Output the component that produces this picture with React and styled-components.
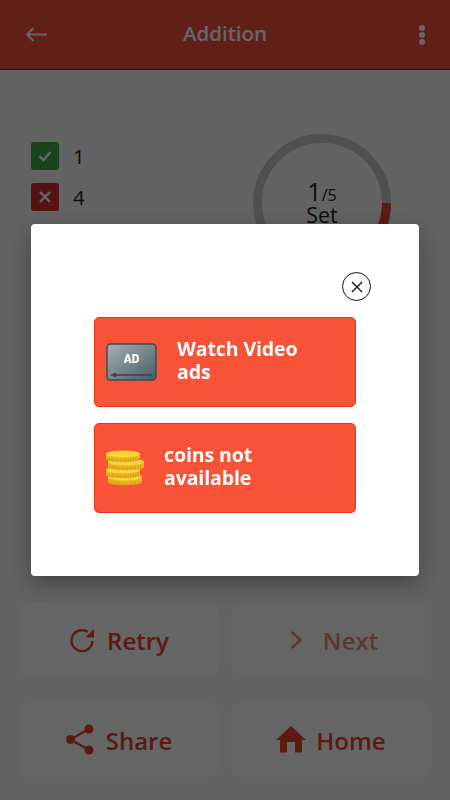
import React from 'react';
import styled, { createGlobalStyle } from 'styled-components';

function RetryIcon() {
  return (
    <svg width="26" height="26" viewBox="0 0 26 26">
      <path d="M23.5 14A10.5 10.5 0 1 1 19 5" fill="none" stroke="currentColor" strokeWidth="2.4" />
      <path d="M25 2v8.500h-8.500z" fill="currentColor" />
    </svg>
  );
}

function NextIcon() {
  return (
    <svg width="13" height="20" viewBox="0 0 13 20">
      <path d="M1.5 2l9 8-9 8" fill="none" stroke="currentColor" strokeWidth="2.6" />
    </svg>
  );
}

function ShareIcon() {
  return (
    <svg width="28" height="31" viewBox="0 0 28 31">
      <path d="M23 5L4.5 15.5 23 26" fill="none" stroke="currentColor" strokeWidth="2.2" />
      <circle cx="4.5" cy="15.5" r="4.5" fill="currentColor" />
      <circle cx="23" cy="5" r="4.5" fill="currentColor" />
      <circle cx="23" cy="26" r="4.5" fill="currentColor" />
    </svg>
  );
}

function HomeIcon() {
  return (
    <svg width="30" height="27" viewBox="0 0 30 27">
      <path d="M15 0l15 14h-4v12.500h-7V16h-8v10.500H4V14H0z" fill="currentColor" />
    </svg>
  );
}

const actions = [
  { label: 'Retry', icon: <RetryIcon />, gap: 12 },
  { label: 'Next', icon: <NextIcon />, gap: 20, disabled: true },
  { label: 'Share', icon: <ShareIcon />, gap: 12 },
  { label: 'Home', icon: <HomeIcon />, gap: 10 },
];

function AdIcon() {
  return (
    <svg width="52" height="39" viewBox="0 0 52 39">
      <defs>
        <linearGradient id="screen" x1="0" y1="0" x2="1" y2="1">
          <stop offset="0" stopColor="#a6afb4" />
          <stop offset="1" stopColor="#4a5c65" />
        </linearGradient>
      </defs>
      <rect x="1" y="1" width="49" height="36" rx="3.500" fill="url(#screen)" stroke="#3e4d57" strokeWidth="1.500" />
      <path d="M5 32h41" stroke="#36454e" strokeWidth="1.500" />
      <circle cx="9" cy="32" r="2" fill="#36454e" />
      <text x="25.500" y="19.500" fill="#fff" fontFamily="'Liberation Mono', monospace" fontWeight="700" fontSize="13" textAnchor="middle">AD</text>
    </svg>
  );
}

function Coin({ x, cy, w }) {
  const rx = w / 2;
  return (
    <g>
      <path d={`M${x} ${cy}v5c0 2 ${rx * 0.45} 3 ${rx} 3s${rx} -1 ${rx} -3v-5z`} fill="#e8b423" />
      <path d={`M${x + 1} ${cy + 5}c${rx * 0.4} 2.200 ${w - 2 - rx * 0.4} 2.200 ${w - 2} 0`} fill="none" stroke="#cf9c18" strokeWidth="3" strokeDasharray="1 1.600" />
      <ellipse cx={x + rx} cy={cy} rx={rx} ry="3.400" fill="#fdd436" />
    </g>
  );
}

function CoinsIcon() {
  return (
    <svg width="40" height="38" viewBox="0 0 40 38">
      <Coin x={2} cy={28} w={34} />
      <Coin x={0} cy={21} w={34} />
      <Coin x={2} cy={13} w={36} />
      <Coin x={0} cy={5} w={34} />
    </svg>
  );
}

// -- Component
export default function App() {
  return (
    <Page>
      <GlobalStyle />
      <Header>
        <svg width="22" height="15" viewBox="0 0 22 15">
          <path d="M22 7.500H2M8.500 1L2 7.500 8.500 14" fill="none" stroke="#fff" strokeWidth="2" />
        </svg>
        <Title>Addition</Title>
        <MoreDots>
          <i />
          <i />
          <i />
        </MoreDots>
      </Header>

      <Summary>
        <Scores>
          <ScoreRow>
            <ScoreBadge $color="#3fa844">
              <svg width="14" height="12" viewBox="0 0 14 12">
                <path d="M1.500 6l4 4 7-8" fill="none" stroke="#fff" strokeWidth="2.400" />
              </svg>
            </ScoreBadge>
            1
          </ScoreRow>
          <ScoreRow>
            <ScoreBadge $color="#d73131">
              <svg width="12" height="12" viewBox="0 0 12 12">
                <path d="M1 1l10 10M11 1L1 11" fill="none" stroke="#fff" strokeWidth="2.400" />
              </svg>
            </ScoreBadge>
            4
          </ScoreRow>
        </Scores>
        <Ring>
          <svg width="140" height="140" viewBox="0 0 140 140">
            <circle cx="70" cy="70" r="64.500" fill="none" stroke="#c9c9c9" strokeWidth="9" />
            <path d="M134.500 70A64.500 64.500 0 0 1 118 113" fill="none" stroke="#e8452c" strokeWidth="9" />
          </svg>
          <RingLabel>
            <SetLine>
              <SetCount>1</SetCount>
              <SetTotal>/5</SetTotal>
            </SetLine>
            <SetWord>Set</SetWord>
          </RingLabel>
        </Ring>
      </Summary>

      <Actions>
        {actions.map((action) => (
          <ActionButton key={action.label} $gap={action.gap} $disabled={action.disabled}>
            {action.icon}
            <ActionLabel>{action.label}</ActionLabel>
          </ActionButton>
        ))}
      </Actions>

      <Scrim>
        <Dialog>
          <CloseRow>
            <CloseButton>
              <svg width="12" height="12" viewBox="0 0 12 12">
                <path d="M1 1l10 10M11 1L1 11" fill="none" stroke="#111" strokeWidth="1.400" />
              </svg>
            </CloseButton>
          </CloseRow>
          <OfferButton $gap={19}>
            <AdIcon />
            <OfferLabel>Watch Video ads</OfferLabel>
          </OfferButton>
          <OfferButton $gap={18}>
            <CoinsIcon />
            <OfferLabel>coins not available</OfferLabel>
          </OfferButton>
        </Dialog>
      </Scrim>
    </Page>
  );
}

// -- Styles
const GlobalStyle = createGlobalStyle`
  html, body {
    margin: 0;
    padding: 0;
    overflow: hidden;
  }

  * {
    box-sizing: border-box;
  }
`;

const Page = styled.div`
  display: flex;
  flex-direction: column;
  width: 450px;
  height: 800px;
  background-color: #f8f8fa;
  font-family: 'Open Sans', sans-serif;
`;

const Header = styled.header`
  display: grid;
  grid-template-columns: 1fr auto 1fr;
  align-items: center;
  height: 70px;
  padding: 0 25px;
  background-color: #f0513a;
  border-bottom: 1px solid #c7280f;
`;

const Title = styled.h1`
  margin: 0 0 3px;
  color: #fff;
  font-size: 20.500px;
  font-weight: 600;
`;

const MoreDots = styled.div`
  display: flex;
  flex-direction: column;
  gap: 1px;
  justify-self: end;

  i {
    width: 6px;
    height: 6px;
    border-radius: 50%;
    background-color: #fff;
  }
`;

const Summary = styled.section`
  display: flex;
  justify-content: space-between;
  align-items: flex-start;
  height: 532px;
  padding: 63px 58px 0 31px;
`;

const Scores = styled.div`
  display: flex;
  flex-direction: column;
  gap: 13px;
  padding-top: 9px;
`;

const ScoreRow = styled.div`
  display: flex;
  align-items: center;
  gap: 14px;
  height: 28px;
  color: #1c1c1c;
  font-size: 20.500px;
`;

const ScoreBadge = styled.span`
  display: flex;
  align-items: center;
  justify-content: center;
  width: 28px;
  height: 28px;
  border-radius: 3px;
  background-color: ${({ $color }) => $color};
`;

const Ring = styled.div`
  display: grid;
  place-items: center;
  width: 140px;
  height: 140px;

  > * {
    grid-area: 1 / 1;
  }
`;

const RingLabel = styled.div`
  display: flex;
  flex-direction: column;
  align-items: center;
  color: #1c1c1c;
`;

const SetLine = styled.span`
  display: block;
  height: 24px;
  line-height: 24px;
`;

const SetCount = styled.span`
  font-size: 25px;
`;

const SetTotal = styled.span`
  font-size: 16px;
`;

const SetWord = styled.span`
  font-size: 21.500px;
  line-height: 24px;
`;

const Actions = styled.section`
  display: grid;
  grid-template-columns: 200px 200px;
  grid-auto-rows: 75px;
  gap: 25px 12px;
  padding: 0 19px;
`;

const ActionButton = styled.div`
  display: flex;
  align-items: center;
  justify-content: center;
  gap: ${({ $gap }) => $gap}px;
  padding-left: ${({ $disabled }) => ($disabled ? 6 : 0)}px;
  border-radius: 12px;
  background-color: #ffffff;
  color: #e5432a;
  font-size: 24px;
  font-weight: 600;
  opacity: ${({ $disabled }) => ($disabled ? 0.6 : 1)};
`;

const ActionLabel = styled.span`
  padding-top: 2px;
`;

const Scrim = styled.div`
  position: fixed;
  inset: 0;
  display: flex;
  align-items: center;
  justify-content: center;
  background-color: rgba(0, 0, 0, 0.6);
`;

const Dialog = styled.div`
  display: flex;
  flex-direction: column;
  align-items: center;
  gap: 16px;
  width: 388px;
  height: 352px;
  padding: 48px 0 0;
  border-radius: 4px;
  background-color: #fff;
  box-shadow: 0 8px 24px rgba(0, 0, 0, 0.35);
`;

const CloseRow = styled.div`
  display: flex;
  justify-content: flex-end;
  width: 100%;
  height: 29px;
  padding-right: 48px;
`;

const CloseButton = styled.div`
  display: flex;
  align-items: center;
  justify-content: center;
  width: 29px;
  height: 29px;
  border: 1.400px solid #111;
  border-radius: 50%;
`;

const OfferButton = styled.div`
  display: flex;
  align-items: center;
  gap: ${({ $gap }) => $gap}px;
  flex: none;
  width: 262px;
  height: 90px;
  padding: 0 11px;
  border: 1px solid #f0321a;
  border-radius: 5px;
  background-color: #f85336;
`;

const OfferLabel = styled.span`
  width: 140px;
  margin-bottom: 3px;
  color: #fff;
  font-size: 19.500px;
  font-weight: 700;
  letter-spacing: -0.1px;
  line-height: 22.500px;
`;
